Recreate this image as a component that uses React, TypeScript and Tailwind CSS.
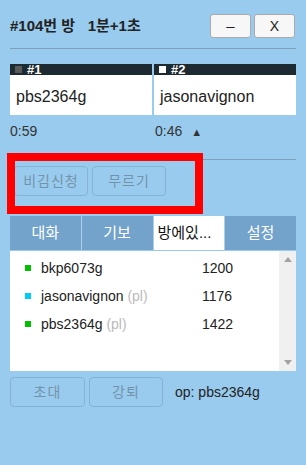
import React from "react";

const FONT = { fontFamily: '"Liberation Sans", "Noto Sans CJK KR", sans-serif' };

type Member = { name: string; color: string; pl: boolean; rating: number };

const members: Member[] = [
  { name: "bkp6073g", color: "bg-[#00c000]", pl: false, rating: 1200 },
  { name: "jasonavignon", color: "bg-[#00ccf5]", pl: true, rating: 1176 },
  { name: "pbs2364g", color: "bg-[#00c000]", pl: true, rating: 1422 },
];

const GhostButton: React.FC<{ label: string; className?: string }> = ({ label, className }) => (
  <button
    disabled
    className={`h-[30px] rounded-[4px] border border-[#86b3d3] text-[14px] text-[#7393ab] tracking-[1px] ${className ?? ""}`}
  >
    {label}
  </button>
);

const PlayerBox: React.FC<{ num: string; name: string; dark: boolean }> = ({ num, name, dark }) => (
  <div className="flex flex-col">
    <div className="h-[11px] bg-[#1e2a32] flex items-center pl-[5px] gap-[5px]">
      <span className={`w-[7px] h-[7px] ${dark ? "bg-[#5a5a5a]" : "bg-white"}`} />
      <span className="text-white font-bold text-[13px] leading-none">{num}</span>
    </div>
    <div className="h-[40px] bg-white flex items-center pl-[6px] pt-[3px] text-[16px] text-[#222]">{name}</div>
  </div>
);

export default function App() {
  const tabs = ["대화", "기보", "방에있...", "설정"];
  return (
    <div className="relative w-[306px] h-[465px] bg-[#99cbee] px-[10px] overflow-hidden" style={FONT}>
      <div className="pt-[14px] h-[38px] flex items-center justify-between">
        <div className="font-bold text-[15px] text-[#222] whitespace-pre">#104번 방   1분+1초</div>
        <div className="flex gap-[3px] mr-[1px]">
          <button className="w-[41px] h-[24px] rounded-[3px] border border-[#aaa] bg-[#f7f7f7] text-[15px] text-[#222]">–</button>
          <button className="w-[41px] h-[24px] rounded-[3px] border border-[#aaa] bg-[#f7f7f7] text-[14px] text-[#222]">X</button>
        </div>
      </div>
      <div className="mt-[10px] border-t border-[#7fa0bb]" />

      <div className="mt-[15px] grid grid-cols-2 gap-[2px]">
        <PlayerBox num="#1" name="pbs2364g" dark />
        <PlayerBox num="#2" name="jasonavignon" dark={false} />
      </div>
      <div className="grid grid-cols-2 gap-[2px] h-[30px] pt-[2px] items-center text-[14px] text-[#333]">
        <div>0:59</div>
        <div className="pl-[1px]">
          0:46 <span className="ml-[5px] text-[11px]">▲</span>
        </div>
      </div>
      <div className="mt-[14px] border-t border-[#7fa0bb]" />

      <div className="mt-[6px] flex gap-[4px] pl-[4px]">
        <GhostButton label="비김신청" className="w-[74px]" />
        <GhostButton label="무르기" className="w-[74px]" />
      </div>

      <div className="mt-[20px] grid grid-cols-4 gap-[1px] h-[34px] bg-[#a9cfea]">
        {tabs.map((t, i) => (
          <div
            key={t}
            className={`flex items-center justify-center text-[15px] ${
              i === 2 ? "bg-white text-[#111] justify-start pl-[4px]" : "bg-[#73a3cb] text-white"
            }`}
          >
            {t}
          </div>
        ))}
      </div>

      <div className="mt-[1px] h-[120px] bg-white flex">
        <div className="flex-1 pt-[3px] pl-[15px]">
          {members.map((m) => (
            <div key={m.name} className="h-[28px] flex items-center text-[14px] text-[#222]">
              <span className={`w-[6px] h-[6px] ${m.color}`} />
              <span className="ml-[10px] w-[161px]">
                {m.name}
                {m.pl && <span className="text-[#bbb]"> (pl)</span>}
              </span>
              <span>{m.rating}</span>
            </div>
          ))}
        </div>
        <div className="w-[17px] bg-[#f0f0f0] flex flex-col items-center justify-between py-[6px]">
          <svg width="8" height="5" viewBox="0 0 8 5">
            <path d="M4 0 L8 5 L0 5 Z" fill="#a3a3a3" />
          </svg>
          <svg width="8" height="5" viewBox="0 0 8 5">
            <path d="M0 0 L8 0 L4 5 Z" fill="#a3a3a3" />
          </svg>
        </div>
      </div>

      <div className="mt-[6px] flex items-center gap-[4px]">
        <GhostButton label="초대" className="w-[75px]" />
        <GhostButton label="강퇴" className="w-[74px]" />
        <span className="ml-[8px] text-[14px] text-[#222]">op: pbs2364g</span>
      </div>

      <div className="absolute left-[7px] top-[153px] w-[196px] h-[61px] border-[8px] border-[#ff0000] pointer-events-none" />
    </div>
  );
}
